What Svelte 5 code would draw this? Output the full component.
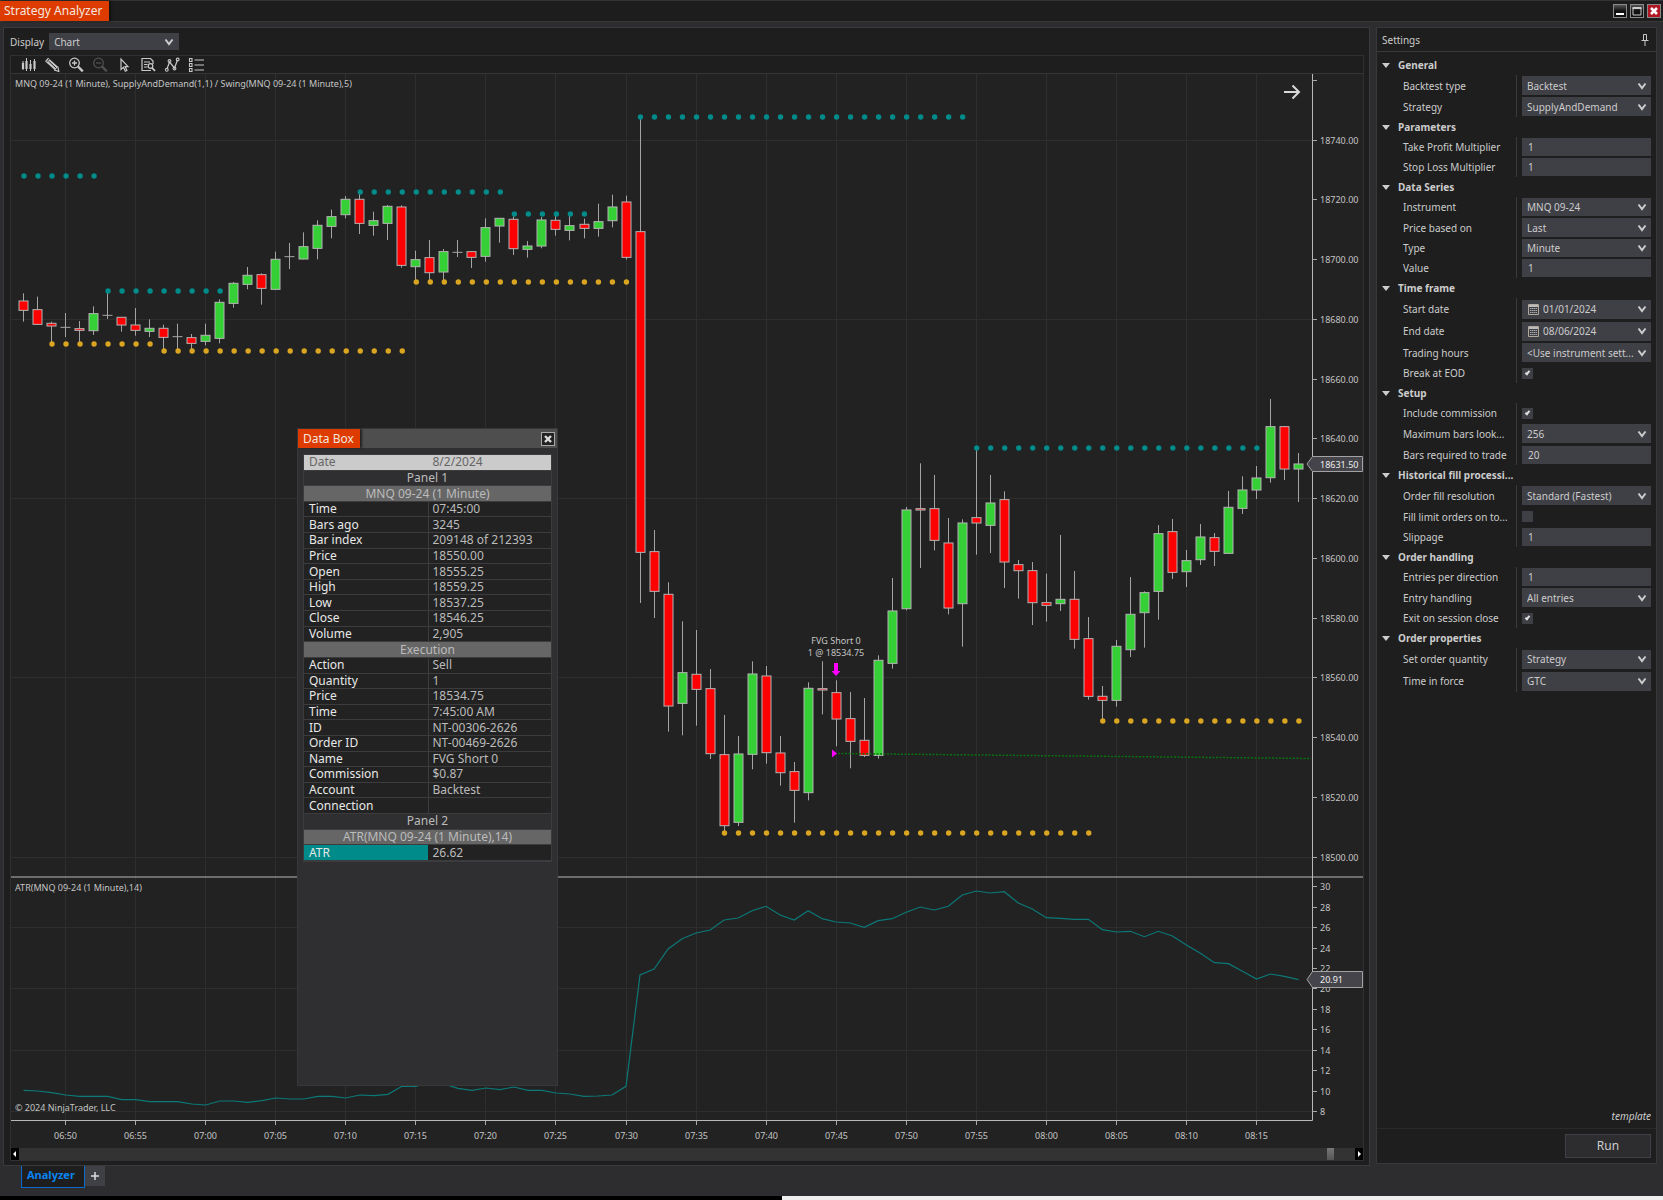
<script>
  // Candles: runs of bars that share a y origin; each row is
  // [kind, high, bodyTop, bodyBottom, low] in thirds of a pixel below the origin.
  const runs = [
    { origin: 0, rows: [
      ['r', 883, 905, 935, 968], ['r', 893, 931, 977, 977], ['r', 968, 972, 982, 1030], ['d', 942, 985, 985, 1014],
      ['r', 966, 988, 995, 1030], ['g', 922, 943, 996, 1008], ['d', 880, 949, 949, 960], ['r', 954, 954, 979, 998],
      ['r', 927, 977, 995, 1010], ['g', 961, 987, 998, 1014], ['r', 977, 987, 1016, 1055], ['d', 974, 1013, 1013, 1055],
      ['r', 1005, 1015, 1034, 1052], ['g', 974, 1008, 1028, 1039], ['g', 901, 909, 1019, 1033], ['g', 849, 852, 914, 926],
      ['g', 804, 828, 857, 871], ['r', 823, 826, 869, 917], ['g', 758, 780, 872, 872], ['d', 732, 773, 773, 810],
      ['g', 700, 742, 781, 781], ['g', 664, 678, 749, 781], ['g', 632, 652, 683, 718], ['g', 591, 600, 648, 658],
      ['r', 585, 600, 674, 705], ['g', 638, 664, 680, 710], ['g', 618, 621, 674, 723], ['r', 619, 623, 800, 806]
    ] },
    { origin: 60, rows: [
      ['g', 575, 601, 624, 662], ['r', 543, 595, 642, 665], ['g', 570, 577, 640, 665], ['d', 543, 580, 580, 594],
      ['r', 577, 577, 596, 627], ['g', 478, 505, 593, 608], ['g', 477, 477, 502, 551], ['r', 472, 480, 570, 588],
      ['g', 546, 560, 572, 596], ['g', 474, 482, 562, 568], ['r', 470, 483, 512, 530], ['g', 470, 499, 515, 544],
      ['r', 479, 495, 509, 538], ['g', 434, 487, 509, 533], ['g', 407, 443, 486, 505], ['r', 410, 428, 596, 602],
      ['r', 175, 517, 1481, 1632]
    ] },
    { origin: 580, rows: [
      ['r', -147, -83, 38, 117], ['r', 10, 45, 382, 458], ['g', 127, 280, 374, 469], ['r', 153, 285, 332, 440],
      ['r', 270, 328, 525, 540], ['r', 408, 526, 741, 757], ['g', 471, 524, 731, 741], ['g', 247, 284, 527, 571],
      ['r', 261, 290, 522, 554], ['r', 471, 521, 582, 620], ['r', 549, 577, 635, 731], ['g', 310, 327, 642, 664],
      ['r', 247, 328, 334, 406], ['r', 304, 340, 421, 502], ['r', 339, 418, 488, 568], ['r', 357, 483, 530, 534],
      ['g', 229, 243, 530, 539], ['g', -3, 95, 254, 269]
    ] },
    { origin: 200, rows: [
      ['g', 924, 932, 1230, 1234], ['r', 793, 928, 934, 1107], ['r', 828, 928, 1025, 1054], ['r', 957, 1031, 1228, 1246]
    ] },
    { origin: 380, rows: [
      ['g', 421, 431, 675, 803], ['r', 212, 415, 433, 527], ['g', 288, 371, 440, 522], ['r', 337, 361, 550, 627],
      ['r', 543, 556, 576, 659], ['r', 549, 574, 672, 738], ['r', 584, 670, 680, 728], ['g', 468, 660, 675, 696],
      ['r', 576, 660, 782, 809], ['r', 714, 778, 953, 962], ['r', 921, 951, 965, 1022], ['g', 783, 801, 965, 983],
      ['g', 594, 705, 813, 834], ['g', 637, 640, 702, 806], ['g', 438, 463, 638, 722], ['r', 420, 457, 581, 600],
      ['g', 513, 544, 579, 624], ['g', 435, 473, 543, 558], ['r', 462, 475, 518, 561], ['g', 336, 384, 524, 524],
      ['g', 292, 332, 389, 405], ['g', 261, 296, 334, 360], ['g', 60, 142, 297, 311], ['r', 142, 142, 271, 303],
      ['g', 222, 254, 271, 369]
    ] }
  ];
  const barX = (i) => 23.6 + i * 14.01;
  const candles = runs
    .flatMap((run) => run.rows.map(([kind, ...v]) => [kind, ...v.map((n) => run.origin + n / 3)]))
    .map(([kind, high, top, bottom, low], i) => ({ kind, high, top, bottom, low, x: Math.round(barX(i) - 0.5) }));

  // Swing levels: [class, y, first bar, last bar]
  const levels = [
    ['teal', 177, 0, 5], ['teal', 292, 6, 14], ['teal', 193, 24, 34], ['teal', 215, 35, 40],
    ['teal', 118, 44, 67], ['teal', 449, 68, 88],
    ['gold', 345, 2, 9], ['gold', 352, 10, 27], ['gold', 283, 28, 43], ['gold', 834, 50, 76], ['gold', 722, 77, 91]
  ];
  const dots = levels.flatMap(([tone, y, from, to]) =>
    Array.from({ length: to - from + 1 }, (_, k) => ({ tone, y, x: barX(from + k) + 0.4 })));

  const atrEarly = [694, 696, 701, 708, 712, 712, 712, 722, 722, 728, 728, 728, 735, 738, 726, 726, 730, 725, 717, 720, 720,
    712, 712, 717, 708, 710, 706, 682, 682, 670, 675, 688, 694, 687, 692, 684, 694, 694, 702, 705, 712, 711, 708, 682];
  const atrMid = [318, 300, 240, 209, 192, 183, 153, 147, 125, 112, 138, 153, 125, 149, 159, 162, 175, 155, 149, 130, 114,
    123, 112, 78, 66, 72, 68, 102, 120];
  const atrLate = [176, 178, 181, 181, 212, 219, 217, 233, 217, 231, 258, 283, 311, 314, 337, 360, 345, 352, 362];
  const atr = [...atrEarly.map((n) => 860 + n / 3), ...atrMid.map((n) => 870 + n / 3), ...atrLate.map((n) => 860 + n / 3)];
  const atrPoints = atr.map((y, i) => `${barX(i).toFixed(1)},${y.toFixed(1)}`).join(' ');

  const times = ['06:50', '06:55', '07:00', '07:05', '07:10', '07:15', '07:20', '07:25', '07:30', '07:35', '07:40', '07:45',
    '07:50', '07:55', '08:00', '08:05', '08:10', '08:15'].map((t, k) => ({ t, x: Math.round(barX(3 + 5 * k) - 0.5) + 0.5 }));
  const crisp = (y) => Math.round(y - 0.5) + 0.5;
  const prices = Array.from({ length: 13 }, (_, k) => ({ t: `${18740 - 20 * k}.00`, y: crisp(141 + k * 59.77), grid: k % 3 === 0 }));
  const atrTicks = Array.from({ length: 12 }, (_, k) => ({ t: 30 - 2 * k, y: crisp(887.8 + k * 20.43), grid: k % 3 === 2 }));

  const settings = [
    ['General', [['Backtest type', 'select', 'Backtest', 21], ['Strategy', 'select', 'SupplyAndDemand', 21]]],
    ['Parameters', [['Take Profit Multiplier', 'text', '1', 20], ['Stop Loss Multiplier', 'text', '1', 20]]],
    ['Data Series', [['Instrument', 'select', 'MNQ 09-24', 20], ['Price based on', 'select', 'Last', 21], ['Type', 'select', 'Minute', 20], ['Value', 'text', '1', 20]]],
    ['Time frame', [['Start date', 'date', '01/01/2024', 22], ['End date', 'date', '08/06/2024', 22], ['Trading hours', 'select', '<Use instrument sett...', 21], ['Break at EOD', 'check', true, 20]]],
    ['Setup', [['Include commission', 'check', true, 20], ['Maximum bars look...', 'select', '256', 21], ['Bars required to trade', 'text', '20', 21]]],
    ['Historical fill processi...', [['Order fill resolution', 'select', 'Standard (Fastest)', 21], ['Fill limit orders on to...', 'check', false, 21], ['Slippage', 'text', '1', 20]]],
    ['Order handling', [['Entries per direction', 'text', '1', 20], ['Entry handling', 'select', 'All entries', 21], ['Exit on session close', 'check', true, 20]]],
    ['Order properties', [['Set order quantity', 'select', 'Strategy', 22], ['Time in force', 'select', 'GTC', 22]]]
  ];
  const slug = (s) => s.toLowerCase().replace(/[^a-z0-9]+/g, '-');

  const dataRows = [
    { kind: 'day', k: 'Date', v: '8/2/2024' }, { kind: 'panel', k: 'Panel 1' }, { kind: 'series', k: 'MNQ 09-24 (1 Minute)' },
    { k: 'Time', v: '07:45:00' }, { k: 'Bars ago', v: '3245' }, { k: 'Bar index', v: '209148 of 212393' }, { k: 'Price', v: '18550.00' },
    { k: 'Open', v: '18555.25' }, { k: 'High', v: '18559.25' }, { k: 'Low', v: '18537.25' }, { k: 'Close', v: '18546.25' }, { k: 'Volume', v: '2,905' },
    { kind: 'series', k: 'Execution' }, { k: 'Action', v: 'Sell' }, { k: 'Quantity', v: '1' }, { k: 'Price', v: '18534.75' }, { k: 'Time', v: '7:45:00 AM' },
    { k: 'ID', v: 'NT-00306-2626' }, { k: 'Order ID', v: 'NT-00469-2626' }, { k: 'Name', v: 'FVG Short 0' }, { k: 'Commission', v: '$0.87' },
    { k: 'Account', v: 'Backtest' }, { k: 'Connection', v: '' }, { kind: 'panel', k: 'Panel 2' }, { kind: 'series', k: 'ATR(MNQ 09-24 (1 Minute),14)' },
    { kind: 'highlight', k: 'ATR', v: '26.62' }
  ];
</script>

{#snippet chevron()}
  <svg class="chevron" viewBox="0 0 10 8" aria-hidden="true"><path d="M1.5 1.5 5 6l3.5-4.5" /></svg>
{/snippet}

<div class="window">
  <header class="titlebar">
    <h1>Strategy Analyzer</h1>
    <div class="winbtns">
      <button aria-label="Minimize"><svg viewBox="0 0 14 14"><path d="M3 10h8" stroke="#fff" stroke-width="2" /></svg></button>
      <button aria-label="Maximize"><svg viewBox="0 0 14 14"><path d="M3 4h8v7H3z" fill="none" stroke="#ccc" /><path d="M2.500 4h9" stroke="#ccc" stroke-width="2" /></svg></button>
      <button class="close" aria-label="Close"><svg viewBox="0 0 14 14"><path d="m4 4 6 6m0-6-6 6" stroke="#fff" stroke-width="2.600" /></svg></button>
    </div>
  </header>

  <div class="body">
    <main>
      <div class="display">
        <label for="display">Display</label>
        <div class="pick"><select id="display"><option>Chart</option></select>{@render chevron()}</div>
      </div>

      <section class="chart">
        <div class="toolbar">
          <button aria-label="Bars"><svg viewBox="0 0 16 16"><path d="M3 4v9M6.500 1v13M10.500 3v11M14.500 2v12" stroke-width="1" /><path d="M3 6v6M6.500 4v8M10.500 7v5M14.500 4v8" stroke-width="2.200" /></svg></button>
          <button aria-label="Draw"><svg viewBox="0 0 16 16"><path d="M2.500 2.500 12.500 11.500" stroke-width="4.500" /><path d="m2.800 4.800 2.400-2.800M4.500 4l7.500 7" stroke="#1e1e1e" stroke-width="1" /><path d="m10 13 4.800 1.300-1-4.600" stroke-width="1.200" /></svg></button>
          <button aria-label="Zoom in"><svg viewBox="0 0 16 16"><circle cx="6.500" cy="6" r="4.800" stroke-width="1.300" /><path d="M4 6h5M6.500 3.500v5" stroke-width="1.300" /><path d="m10 9.500 4.800 4.800" stroke-width="2.400" /></svg></button>
          <button class="off" aria-label="Zoom out"><svg viewBox="0 0 16 16"><circle cx="6.500" cy="6" r="4.800" stroke-width="1.300" /><path d="M4 6h5" stroke-width="1.300" /><path d="m10 9.500 4.800 4.800" stroke-width="2.400" /></svg></button>
          <button aria-label="Cursor"><svg viewBox="0 0 16 16"><path d="M5 2v10.500l2.500-2.300 1.800 4 1.600-.700-1.800-3.900H12z" stroke-width="1.200" /></svg></button>
          <button aria-label="Data box"><svg viewBox="0 0 16 16"><path d="M13 7V4L10.500 1.500H2v12h9M4 5h6M4 7.500h3.500M4 10h3.500" stroke-width="1.200" /><circle cx="10.500" cy="9" r="2.300" stroke-width="1.200" /><path d="m12 10.800 3 3" stroke-width="1.800" /></svg></button>
          <button aria-label="Strategies"><svg viewBox="0 0 16 16"><path d="m3 12 2.500-7 5 6 3-8" stroke-width="1.200" /><g stroke-width="1.100"><circle cx="2.800" cy="12.800" r="1.400" /><circle cx="5.500" cy="4" r="1.400" /><circle cx="10.500" cy="11.500" r="1.400" /><circle cx="13.700" cy="2.500" r="1.400" /></g></svg></button>
          <button aria-label="Properties"><svg viewBox="0 0 16 16"><path d="M6.500 3H16M6.500 8H16M6.500 13H16" stroke-width="1.200" /><path d="M1.500 1.500h2.500v3H1.500zM1.500 6.500h2.500v3H1.500zM1.500 11.500h2.500v3H1.500z" stroke-width="1.100" /></svg></button>
        </div>

        <svg class="plot" viewBox="11 75 1352 1074" role="img" aria-label="MNQ 09-24 one minute candles with ATR">
          <g class="grid">
            {#each times as { x }}<path d="M{x} 75V1121" />{/each}
            {#each [...prices, ...atrTicks].filter((p) => p.grid) as { y }}<path d="M11 {y}H1312" />{/each}
          </g>

          {#each candles as c}
            <path class="wick" d="M{c.x + 0.5} {c.high}V{c.low}" />
            {#if c.kind === 'd'}
              <path class="wick" d="M{c.x - 4.5} {c.top}h10" />
            {:else}
              <rect class={c.kind} x={c.x - 4} y={c.top + 0.3} width="9" height={Math.max(c.bottom - c.top - 0.6, 1)} />
            {/if}
          {/each}
          {#each dots as d}<circle class={d.tone} cx={d.x} cy={d.y} r="2.700" />{/each}

          <path class="trade" d="M838 754.500 1311 759.500" />
          <path class="sell" d="M832 750.500l5 4-5 4zM834 664h4v8h2.500L836 677l-4.500-5h2.500z" />
          <text x="836" y="645" text-anchor="middle">FVG Short 0</text>
          <text x="836" y="657" text-anchor="middle">1 @ 18534.75</text>

          <polyline class="atr" points={atrPoints} />

          <path class="axis" d="M1312.500 75V1121.500H11M11 878H1363" />
          <g class="ticks">
            <path d="M1312 81.500h5" />
            {#each [...prices, ...atrTicks] as p}
              <path d="M1312 {p.y}h5" />
              <text x="1320" y={p.y + 3.5}>{p.t}</text>
            {/each}
            {#each times as { t, x }}
              <path d="M{x} 1122v4" />
              <text {x} y="1140" text-anchor="middle">{t}</text>
            {/each}
          </g>

          <path class="tag" d="M1307 465l5.500-7.500h50v15h-50z" />
          <text class="bright" x="1320" y="469">18631.50</text>
          <path class="tag" d="M1307 980.500l5.500-8h50v16h-50z" />
          <text class="bright" x="1320" y="984">20.91</text>

          <text class="name" x="15" y="88">MNQ 09-24 (1 Minute), SupplyAndDemand(1,1) / Swing(MNQ 09-24 (1 Minute),5)</text>
          <text class="name" x="15" y="892">ATR(MNQ 09-24 (1 Minute),14)</text>
          <text class="name" x="15" y="1112">© 2024 NinjaTrader, LLC</text>
          <path class="goto" d="M1284 93h15M1292.500 86.500l6.500 6.500-6.500 6.500" />
        </svg>

        <div class="scroll">
          <button aria-label="Scroll left"><svg viewBox="0 0 8 12"><path d="M5 3v6L2 6z" /></svg></button>
          <div class="track"><span class="thumb"></span></div>
          <button aria-label="Scroll right"><svg viewBox="0 0 8 12"><path d="M3 3v6l3-3z" /></svg></button>
        </div>

        <aside class="databox">
          <div class="dbhead"><h2>Data Box</h2>
            <button aria-label="Close data box"><svg viewBox="0 0 14 14"><path d="m4 4 6 6m0-6-6 6" stroke="#ddd" stroke-width="2.400" /></svg></button></div>
          <table>
            <tbody>
              {#each dataRows as row}
                <tr class={row.kind ?? 'plain'}>
                  {#if row.v === undefined}<th colspan="2">{row.k}</th>{:else}<th scope="row">{row.k}</th><td>{row.v}</td>{/if}
                </tr>
              {/each}
            </tbody>
          </table>
        </aside>
      </section>
    </main>

    <aside class="settings">
      <div class="shead"><h2>Settings</h2>
        <button aria-label="Pin"><svg viewBox="0 0 8 12"><path d="M2.500.500h3v6h-3zM.500 6.500h7M4 6.500V12" fill="none" stroke="#c8c8c8" /></svg></button></div>
      <form>
        {#each settings as [title, rows]}
          <button type="button" class="group"><svg viewBox="0 0 8 5" aria-hidden="true"><path d="M0 0h8L4 5z" /></svg>{title}</button>
          <div class="rows">
            {#each rows as [label, kind, value, h]}
              {@const id = slug(label)}
              <div class="row h{h}">
                <label for={id}>{label}</label>
                {#if kind === 'select'}
                  <div class="pick"><select {id}><option>{value}</option></select>{@render chevron()}</div>
                {:else if kind === 'text'}
                  <input {id} type="text" {value} />
                {:else if kind === 'date'}
                  <div class="pick date">
                    <svg class="cal" viewBox="0 0 11 11" aria-hidden="true"><path d="M.500.500h10v10H.500z" fill="none" stroke="#b0a89c" /><path d="M1 2h9" stroke="#bbb" stroke-width="2" /><path d="M2 4.500h7M2 6.500h7M2 8.500h7" stroke="#aaa" stroke-dasharray="1.500 .500" /></svg>
                    <input {id} type="text" {value} />{@render chevron()}
                  </div>
                {:else}
                  <input {id} type="checkbox" checked={value} />
                {/if}
              </div>
            {/each}
          </div>
        {/each}
      </form>
      <a class="template" href="#template">template</a>
      <div class="run"><button>Run</button></div>
    </aside>
  </div>

  <nav class="tabs"><button class="tab">Analyzer</button><button class="plus" aria-label="Add tab"><svg viewBox="0 0 10 10"><path d="M5 1v8M1 5h8" stroke="#ddd" stroke-width="1.500" /></svg></button></nav>
  <footer class="edge"></footer>
</div>

<style>
  :global(body) { margin: 0; background: #2d2d30; }
  .window { display: flex; flex-direction: column; min-height: 100vh; background: #2d2d30; color: #ccc; font: 10px/14px "Noto Sans", "Open Sans", sans-serif; }
  h1, h2 { margin: 0; font-weight: 400; }
  button, input, select { font: inherit; color: inherit; margin: 0; padding: 0; border: 0; border-radius: 0; background: none; box-sizing: border-box; outline-offset: 1px; }
  button { display: flex; align-items: center; justify-content: center; }
  svg { display: block; }

  .titlebar { display: flex; justify-content: space-between; align-items: center; height: 20px; background: #1d1d1d; border-top: 1px solid #333; border-bottom: 1px solid #38383a; }
  h1 { padding: 0 6px 0 4px; background: #de3b00; color: #f4e6df; font-size: 12px; line-height: 20px; box-shadow: 2px 0 2px #111; }
  .winbtns { display: flex; gap: 3px; padding-right: 2px; }
  .winbtns button { width: 14px; height: 14px; border: 1px solid #8a8a8a; background: linear-gradient(#555, #111 50%); }
  .winbtns .close { background: #b01722; }
  .winbtns svg { width: 14px; height: 14px; flex: none; }

  .body { display: flex; gap: 6px; padding: 5px 6px 0 3px; }
  main { flex: 1; min-width: 0; background: #1e1e1e; border: 1px solid #3a3a3d; padding: 5px 5px 4px 6px; }
  .display { display: flex; gap: 5px; align-items: center; margin-bottom: 5px; }
  .display .pick { width: 130px; height: 17px; }
  .display select { padding-left: 5px; }
  .display .chevron { right: 5px; }

  .pick { position: relative; display: flex; background: #3f3f46; }
  select { appearance: none; width: 100%; min-width: 0; padding-left: 5px; overflow: hidden; }
  option { background: #3f3f46; }
  .chevron { position: absolute; right: 4px; top: 50%; width: 10px; height: 8px; margin-top: -4px; fill: none; stroke: #ccc; stroke-width: 2; pointer-events: none; }

  .chart { position: relative; border: 1px solid #303033; background: #222; }
  .toolbar { display: flex; gap: 8px; height: 17px; padding: 0 9px; align-items: center; background: #1e1e1e; border-bottom: 1px solid #363638; }
  .toolbar svg { width: 16px; height: 16px; fill: none; stroke: #c8c8c8; }
  .toolbar .off svg { stroke: #505050; }

  .plot { width: 100%; height: auto; font-size: 9px; fill: #c4c4c4; }
  .grid path { stroke: #2e2e2e; }
  .wick { stroke: #a4a4a4; }
  rect.r, rect.g { stroke: #b4b4b4; fill: #f00; }
  rect.g { fill: #35d035; }
  .teal { fill: #008b8b; }
  .gold { fill: #daa520; }
  .trade { stroke: #0a7010; stroke-width: 1.5; stroke-dasharray: 2 1.5; }
  .sell { fill: #f0f; }
  .atr { fill: none; stroke: #0c7878; stroke-width: 1.2; }
  .axis { fill: none; stroke: #b8b8b8; }
  .ticks path { stroke: #aaa; }
  .tag { fill: #45444b; stroke: #a2a2a2; }
  .bright { fill: #eee; }
  .goto { fill: none; stroke: #d8d8d8; stroke-width: 2; }

  .scroll { display: flex; height: 12px; background: #333; }
  .scroll button { width: 8px; height: 12px; background: #000; }
  .scroll svg { width: 8px; height: 12px; fill: #fff; }
  .track { flex: 1; display: flex; justify-content: flex-end; padding-right: 21px; }
  .thumb { width: 7px; background: linear-gradient(#777, #555); }

  .databox { position: absolute; left: 286px; top: 372px; width: 259px; height: 656px; background: #2f2f31; border: 1px solid #38383a; }
  .dbhead { display: flex; justify-content: space-between; align-items: center; background: #4e4e4e; padding-right: 2px; margin-bottom: 6px; }
  .dbhead h2 { padding: 0 6px 0 5px; background: #de3b00; color: #f4e6df; font-size: 12px; line-height: 19px; box-shadow: 2px 0 2px #222; }
  .dbhead button { width: 14px; height: 14px; border: 1px solid #aaa; background: #222; }
  .dbhead svg { width: 14px; height: 14px; flex: none; }
  table { width: 249px; height: 408px; margin-left: 5px; border: 1px solid #3c3c3f; border-collapse: separate; border-spacing: 0; table-layout: fixed; font-size: 12px; line-height: 14px; background: #222; }
  th, td { padding: 0 0 0 5px; text-align: left; font-weight: 400; border-bottom: 1px solid #3c3c3f; }
  th { color: #e8e8e8; }
  td { color: #bbb; }
  .plain td { border-left: 1px solid #3c3c3f; padding-left: 4px; }
  .day th, .day td { background: #cbcbcb; color: #666; }
  .panel th { background: #2f2f31; color: #bbb; text-align: center; padding: 0; }
  .series th { background: #666; color: #bbb; text-align: center; padding: 0; }
  .highlight th { background: #008b8b; }

  .settings { width: 281px; flex: none; box-sizing: border-box; margin-bottom: 2px; display: flex; flex-direction: column; background: #1e1e1e; border: 1px solid #38383b; }
  .shead { display: flex; justify-content: space-between; align-items: center; height: 23px; padding: 0 7px 0 5px; border-bottom: 1px solid #3a3a3d; }
  .shead h2 { font-size: 10px; }
  .shead svg { width: 8px; height: 12px; }
  form { padding: 3px 5px 0; }
  .group { gap: 8px; height: 20px; font-weight: 700; justify-content: flex-start; }
  .group svg { width: 8px; height: 5px; fill: #ccc; }
  .rows { margin-left: 21px; background: linear-gradient(#3a3a3a, #3a3a3a) 113px 0 / 1px 100% no-repeat; }
  .row { display: grid; grid-template-columns: 119px 1fr; align-items: center; }
  .h20 { height: 20px; }
  .h21 { height: 21px; }
  .h22 { height: 22px; }
  .row > .pick, .row > input[type="text"] { height: 18px; }
  .h21 > .pick, .h22 > .pick { height: 19px; }
  .row > input[type="text"], .date input { background: #3f3f46; padding-left: 6px; min-width: 0; width: 100%; }
  .date { align-items: center; padding-left: 6px; }
  .cal { width: 11px; height: 11px; flex: none; }
  .row .date input { padding-left: 4px; height: 18px; }
  input[type="checkbox"] { appearance: none; width: 11px; height: 11px; background: #3f3f46; display: grid; place-items: center; }
  input[type="checkbox"]:checked::before { content: ""; width: 1px; height: 3px; margin-bottom: 2px; border: solid #ddd; border-width: 0 2px 2px 0; transform: rotate(40deg); }
  .template { margin: auto 5px 5px auto; color: #ccc; font-style: italic; text-decoration: none; }
  .run { display: flex; justify-content: flex-end; padding: 5px 5px; border-top: 1px solid #2a2a2c; }
  .run button { width: 86px; height: 24px; background: #2d2d30; border: 1px solid #3f3f46; font-size: 12px; }

  .tabs { display: flex; align-items: flex-start; padding-left: 21px; margin-bottom: 7px; }
  .tab { height: 22px; padding: 0 9px 3px 5px; background: #1e1e1e; border: solid #0a6cc8; border-width: 0 1px 1px; color: #0a84f0; font-weight: 700; font-size: 11px; }
  .plus { width: 20px; height: 20px; background: #3f3f46; }
  .plus svg { width: 10px; height: 10px; }
  .edge { height: 4px; margin-top: auto; background: linear-gradient(90deg, #000 47%, #eee 47%); }
</style>
